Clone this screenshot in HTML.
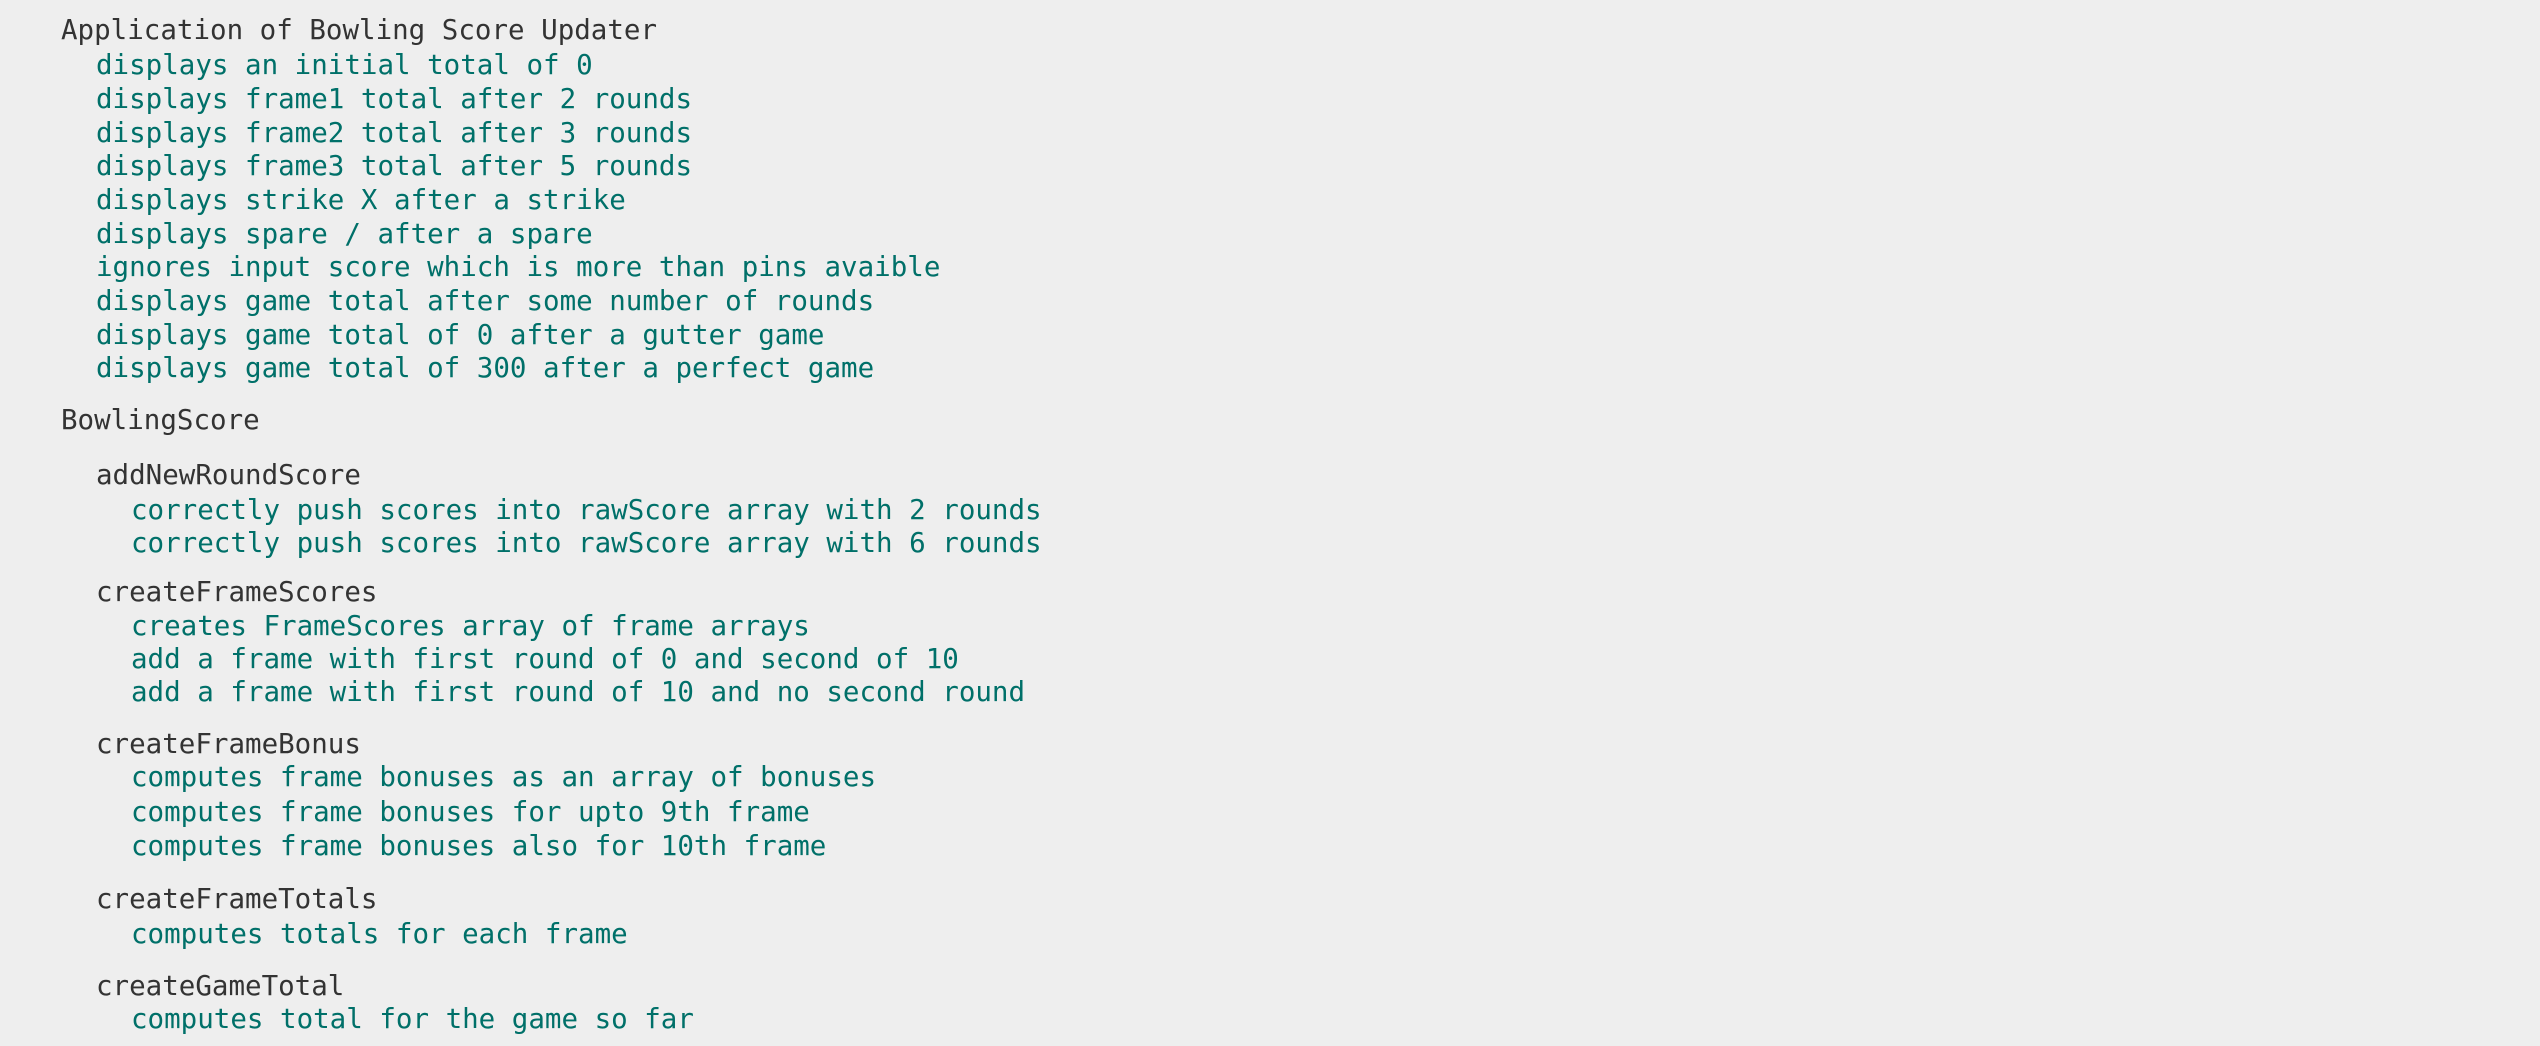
<!DOCTYPE html>
<html><head><meta charset="utf-8"><style>
html,body{margin:0;padding:0;background:#eeeeee;width:2540px;height:1046px;overflow:hidden}
.l{position:absolute;white-space:pre;font-family:"DejaVu Sans Mono","Liberation Mono",monospace;font-size:27.5px;line-height:34px;color:#333}
.g{color:#007069}
</style></head><body>
<div class="l" style="left:61px;top:13px">Application of Bowling Score Updater</div>
<div class="l g" style="left:96px;top:48px">displays an initial total of 0</div>
<div class="l g" style="left:96px;top:82px">displays frame1 total after 2 rounds</div>
<div class="l g" style="left:96px;top:116px">displays frame2 total after 3 rounds</div>
<div class="l g" style="left:96px;top:149px">displays frame3 total after 5 rounds</div>
<div class="l g" style="left:96px;top:183px">displays strike X after a strike</div>
<div class="l g" style="left:96px;top:217px">displays spare / after a spare</div>
<div class="l g" style="left:96px;top:250px">ignores input score which is more than pins avaible</div>
<div class="l g" style="left:96px;top:284px">displays game total after some number of rounds</div>
<div class="l g" style="left:96px;top:318px">displays game total of 0 after a gutter game</div>
<div class="l g" style="left:96px;top:351px">displays game total of 300 after a perfect game</div>
<div class="l" style="left:61px;top:403px">BowlingScore</div>
<div class="l" style="left:96px;top:458px">addNewRoundScore</div>
<div class="l g" style="left:131px;top:493px">correctly push scores into rawScore array with 2 rounds</div>
<div class="l g" style="left:131px;top:526px">correctly push scores into rawScore array with 6 rounds</div>
<div class="l" style="left:96px;top:575px">createFrameScores</div>
<div class="l g" style="left:131px;top:609px">creates FrameScores array of frame arrays</div>
<div class="l g" style="left:131px;top:642px">add a frame with first round of 0 and second of 10</div>
<div class="l g" style="left:131px;top:675px">add a frame with first round of 10 and no second round</div>
<div class="l" style="left:96px;top:727px">createFrameBonus</div>
<div class="l g" style="left:131px;top:760px">computes frame bonuses as an array of bonuses</div>
<div class="l g" style="left:131px;top:795px">computes frame bonuses for upto 9th frame</div>
<div class="l g" style="left:131px;top:829px">computes frame bonuses also for 10th frame</div>
<div class="l" style="left:96px;top:882px">createFrameTotals</div>
<div class="l g" style="left:131px;top:917px">computes totals for each frame</div>
<div class="l" style="left:96px;top:969px">createGameTotal</div>
<div class="l g" style="left:131px;top:1002px">computes total for the game so far</div>
</body></html>
